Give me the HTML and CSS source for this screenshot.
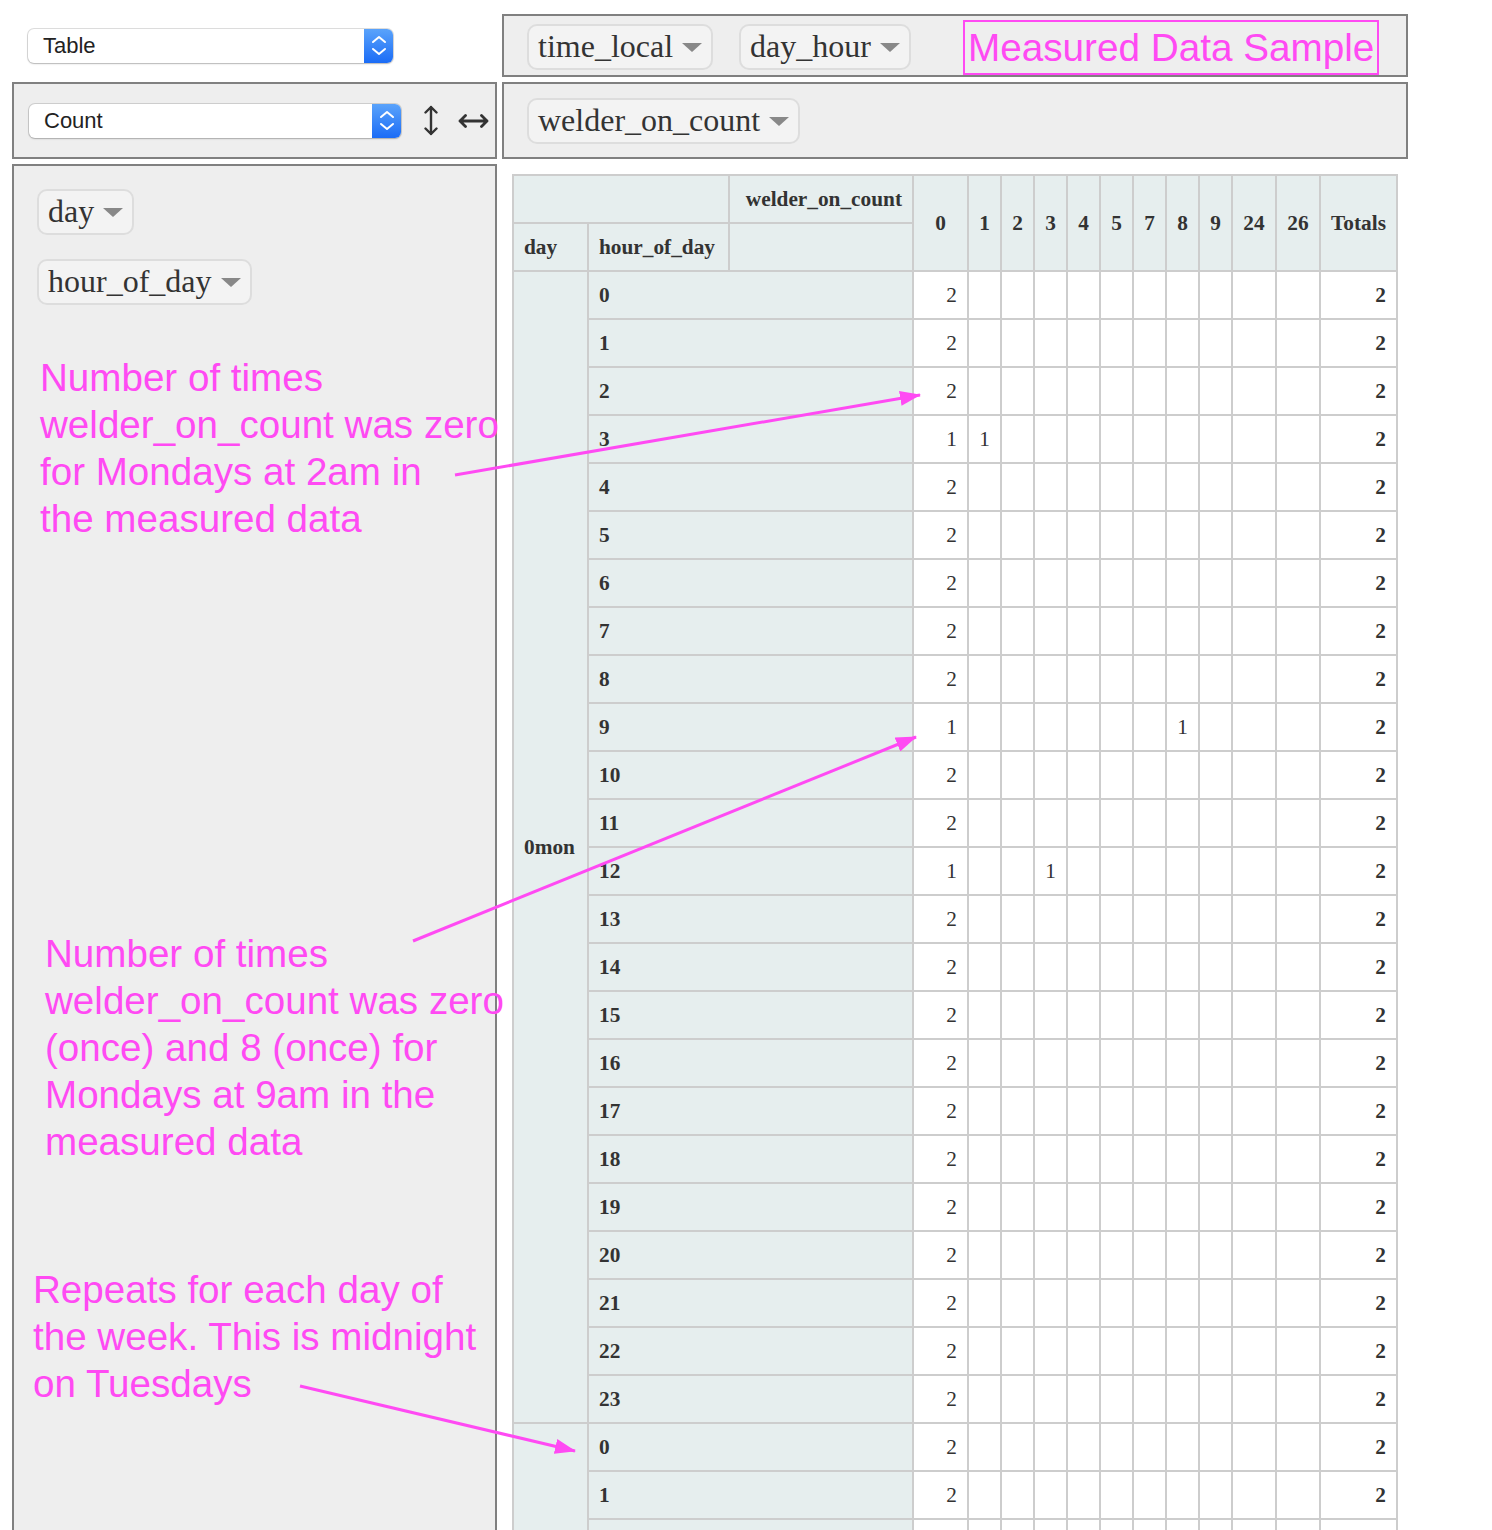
FILE: index.html
```html
<!DOCTYPE html>
<html>
<head>
<meta charset="utf-8">
<title>Pivot</title>
<link rel="stylesheet" href="styles.css">
</head>
<body>
<div class="page">
  <div class="ui">
    <div class="cell-renderer">
      <div class="select sel-table">
        <span class="select-label">Table</span>
        <span class="select-btn"><svg width="16" height="22" viewBox="0 0 16 22"><path d="M2 7 L8 2 L14 7 M2 14 L8 19 L14 14" fill="none" stroke="#fff" stroke-width="2" stroke-linecap="round" stroke-linejoin="round"/></svg></span>
      </div>
    </div>
    <div class="panel cols">
      <span class="pill">time_local<span class="tri"></span></span>
      <span class="pill">day_hour<span class="tri"></span></span>
      <span class="note-box">Measured Data Sample</span>
    </div>
    <div class="panel vals">
      <div class="select sel-count">
        <span class="select-label">Count</span>
        <span class="select-btn"><svg width="16" height="22" viewBox="0 0 16 22"><path d="M2 7 L8 2 L14 7 M2 14 L8 19 L14 14" fill="none" stroke="#fff" stroke-width="2" stroke-linecap="round" stroke-linejoin="round"/></svg></span>
      </div>
      <svg class="ord-v" width="14" height="31" viewBox="0 0 14 31"><path d="M7 2 V29 M1.5 7.5 L7 2 L12.5 7.5 M1.5 23.5 L7 29 L12.5 23.5" fill="none" stroke="#333" stroke-width="2.4" stroke-linecap="round" stroke-linejoin="round"/></svg>
      <svg class="ord-h" width="31" height="14" viewBox="0 0 31 14"><path d="M2 7 H29 M7.5 1.5 L2 7 L7.5 12.5 M23.5 1.5 L29 7 L23.5 12.5" fill="none" stroke="#333" stroke-width="2.8" stroke-linecap="round" stroke-linejoin="round"/></svg>
    </div>
    <div class="panel cols2">
      <span class="pill">welder_on_count<span class="tri"></span></span>
    </div>
    <div class="panel rows">
      <span class="pill">day<span class="tri"></span></span>
      <span class="pill">hour_of_day<span class="tri"></span></span>
    </div>
    <div class="output">
      <table class="pvt">
        <colgroup>
          <col style="width:75px"><col style="width:141px"><col style="width:184px"><col style="width:55px">
          <col style="width:33px"><col style="width:33px"><col style="width:33px"><col style="width:33px">
          <col style="width:33px"><col style="width:33px"><col style="width:33px"><col style="width:33px">
          <col style="width:44px"><col style="width:44px"><col style="width:77px">
        </colgroup>
        <thead>
          <tr><th colspan="2"></th><th class="axis-r">welder_on_count</th><th rowspan="2" class="cl">0</th><th rowspan="2" class="cl">1</th><th rowspan="2" class="cl">2</th><th rowspan="2" class="cl">3</th><th rowspan="2" class="cl">4</th><th rowspan="2" class="cl">5</th><th rowspan="2" class="cl">7</th><th rowspan="2" class="cl">8</th><th rowspan="2" class="cl">9</th><th rowspan="2" class="cl">24</th><th rowspan="2" class="cl">26</th><th rowspan="2" class="cl">Totals</th></tr>
          <tr><th>day</th><th>hour_of_day</th><th></th></tr>
        </thead>
        <tbody>
          <tr><th rowspan="24">0mon</th><th colspan="2">0</th><td>2</td><td></td><td></td><td></td><td></td><td></td><td></td><td></td><td></td><td></td><td></td><td class="tot">2</td></tr>
          <tr><th colspan="2">1</th><td>2</td><td></td><td></td><td></td><td></td><td></td><td></td><td></td><td></td><td></td><td></td><td class="tot">2</td></tr>
          <tr><th colspan="2">2</th><td>2</td><td></td><td></td><td></td><td></td><td></td><td></td><td></td><td></td><td></td><td></td><td class="tot">2</td></tr>
          <tr><th colspan="2">3</th><td>1</td><td>1</td><td></td><td></td><td></td><td></td><td></td><td></td><td></td><td></td><td></td><td class="tot">2</td></tr>
          <tr><th colspan="2">4</th><td>2</td><td></td><td></td><td></td><td></td><td></td><td></td><td></td><td></td><td></td><td></td><td class="tot">2</td></tr>
          <tr><th colspan="2">5</th><td>2</td><td></td><td></td><td></td><td></td><td></td><td></td><td></td><td></td><td></td><td></td><td class="tot">2</td></tr>
          <tr><th colspan="2">6</th><td>2</td><td></td><td></td><td></td><td></td><td></td><td></td><td></td><td></td><td></td><td></td><td class="tot">2</td></tr>
          <tr><th colspan="2">7</th><td>2</td><td></td><td></td><td></td><td></td><td></td><td></td><td></td><td></td><td></td><td></td><td class="tot">2</td></tr>
          <tr><th colspan="2">8</th><td>2</td><td></td><td></td><td></td><td></td><td></td><td></td><td></td><td></td><td></td><td></td><td class="tot">2</td></tr>
          <tr><th colspan="2">9</th><td>1</td><td></td><td></td><td></td><td></td><td></td><td></td><td>1</td><td></td><td></td><td></td><td class="tot">2</td></tr>
          <tr><th colspan="2">10</th><td>2</td><td></td><td></td><td></td><td></td><td></td><td></td><td></td><td></td><td></td><td></td><td class="tot">2</td></tr>
          <tr><th colspan="2">11</th><td>2</td><td></td><td></td><td></td><td></td><td></td><td></td><td></td><td></td><td></td><td></td><td class="tot">2</td></tr>
          <tr><th colspan="2">12</th><td>1</td><td></td><td></td><td>1</td><td></td><td></td><td></td><td></td><td></td><td></td><td></td><td class="tot">2</td></tr>
          <tr><th colspan="2">13</th><td>2</td><td></td><td></td><td></td><td></td><td></td><td></td><td></td><td></td><td></td><td></td><td class="tot">2</td></tr>
          <tr><th colspan="2">14</th><td>2</td><td></td><td></td><td></td><td></td><td></td><td></td><td></td><td></td><td></td><td></td><td class="tot">2</td></tr>
          <tr><th colspan="2">15</th><td>2</td><td></td><td></td><td></td><td></td><td></td><td></td><td></td><td></td><td></td><td></td><td class="tot">2</td></tr>
          <tr><th colspan="2">16</th><td>2</td><td></td><td></td><td></td><td></td><td></td><td></td><td></td><td></td><td></td><td></td><td class="tot">2</td></tr>
          <tr><th colspan="2">17</th><td>2</td><td></td><td></td><td></td><td></td><td></td><td></td><td></td><td></td><td></td><td></td><td class="tot">2</td></tr>
          <tr><th colspan="2">18</th><td>2</td><td></td><td></td><td></td><td></td><td></td><td></td><td></td><td></td><td></td><td></td><td class="tot">2</td></tr>
          <tr><th colspan="2">19</th><td>2</td><td></td><td></td><td></td><td></td><td></td><td></td><td></td><td></td><td></td><td></td><td class="tot">2</td></tr>
          <tr><th colspan="2">20</th><td>2</td><td></td><td></td><td></td><td></td><td></td><td></td><td></td><td></td><td></td><td></td><td class="tot">2</td></tr>
          <tr><th colspan="2">21</th><td>2</td><td></td><td></td><td></td><td></td><td></td><td></td><td></td><td></td><td></td><td></td><td class="tot">2</td></tr>
          <tr><th colspan="2">22</th><td>2</td><td></td><td></td><td></td><td></td><td></td><td></td><td></td><td></td><td></td><td></td><td class="tot">2</td></tr>
          <tr><th colspan="2">23</th><td>2</td><td></td><td></td><td></td><td></td><td></td><td></td><td></td><td></td><td></td><td></td><td class="tot">2</td></tr>
          <tr><th rowspan="3"></th><th colspan="2">0</th><td>2</td><td></td><td></td><td></td><td></td><td></td><td></td><td></td><td></td><td></td><td></td><td class="tot">2</td></tr>
          <tr><th colspan="2">1</th><td>2</td><td></td><td></td><td></td><td></td><td></td><td></td><td></td><td></td><td></td><td></td><td class="tot">2</td></tr>
          <tr><th colspan="2"></th><td></td><td></td><td></td><td></td><td></td><td></td><td></td><td></td><td></td><td></td><td></td><td class="tot"></td></tr>
        </tbody>
      </table>
    </div>
  </div>

  <div class="note n1">Number of times<br>welder_on_count was zero<br>for Mondays at 2am in<br>the measured data</div>
  <div class="note n2">Number of times<br>welder_on_count was zero<br>(once) and 8 (once) for<br>Mondays at 9am in the<br>measured data</div>
  <div class="note n3">Repeats for each day of<br>the week. This is midnight<br>on Tuesdays</div>

  <svg class="arrows" width="1492" height="1530" viewBox="0 0 1492 1530">
    <defs>
      <marker id="ah" markerWidth="21" markerHeight="15" refX="20" refY="7.5" orient="auto" markerUnits="userSpaceOnUse">
        <path d="M0,0 L21,7.5 L0,15 Z" fill="#ff4af3"/>
      </marker>
    </defs>
    <line x1="455" y1="475" x2="920" y2="395" stroke="#ff4af3" stroke-width="3" marker-end="url(#ah)"/>
    <line x1="413" y1="941" x2="916" y2="737" stroke="#ff4af3" stroke-width="3" marker-end="url(#ah)"/>
    <line x1="300" y1="1386" x2="575" y2="1451" stroke="#ff4af3" stroke-width="3" marker-end="url(#ah)"/>
  </svg>
</div>
</body>
</html>
```
FILE: styles.css
```css
html, body {
  margin: 0;
  padding: 0;
}
body {
  width: 1492px;
  height: 1530px;
  overflow: hidden;
  background: #fff;
  font-family: "Liberation Serif", "Times New Roman", serif;
  color: #333;
}
.page {
  position: relative;
  padding: 14px 0 0 12px;
}
.ui {
  display: grid;
  grid-template-columns: 485px 906px;
  grid-template-rows: 63px 77px auto;
  gap: 5px;
}
.panel {
  border: 2px solid #808080;
  background: #eee;
  box-sizing: border-box;
}
.cell-renderer {
  padding: 15px 0 0 16px;
}
.select {
  display: flex;
  height: 34px;
  box-sizing: border-box;
  border-radius: 6px;
  background: #fff;
  box-shadow: 0 0 0 1px rgba(0, 0, 0, 0.13), 0 1px 2px rgba(0, 0, 0, 0.18);
  font-family: "Liberation Sans", Arial, sans-serif;
  font-size: 22px;
  color: #222;
}
.sel-table { width: 365px; }
.sel-count { width: 372px; }
.select-label {
  flex: 1;
  padding-left: 15px;
  line-height: 34px;
}
.select-btn {
  width: 29px;
  border-radius: 0 6px 6px 0;
  background: linear-gradient(#5aa3fb, #1b6cf6);
  display: flex;
  align-items: center;
  justify-content: center;
}
.cols {
  display: flex;
  align-items: center;
  padding: 3px 0 0 23px;
}
.cols .pill + .pill { margin-left: 26px; }
.cols2 {
  display: flex;
  align-items: center;
  padding: 1px 0 0 23px;
}
.vals {
  display: flex;
  align-items: center;
  padding: 0 0 0 15px;
}
.ord-v { margin-left: 23px; }
.ord-h { margin-left: 20px; }
.rows {
  display: flex;
  flex-direction: column;
  align-items: flex-start;
  gap: 24px;
  padding: 23px 0 0 23px;
}
.pill {
  display: inline-flex;
  align-items: center;
  height: 46px;
  box-sizing: border-box;
  padding: 0 9px 2px 9px;
  background: #f3f3f3;
  border: 2px solid #ddd;
  border-radius: 10px;
  font-size: 32px;
  line-height: 1;
  color: #333;
  white-space: nowrap;
}
.tri {
  width: 0;
  height: 0;
  border-left: 10px solid transparent;
  border-right: 10px solid transparent;
  border-top: 9px solid #888;
  margin-left: 9px;
  margin-top: 3px;
}
.note-box {
  margin-left: 52px;
  height: 55px;
  box-sizing: border-box;
  border: 2px solid #ff4af3;
  padding: 5px 3px 5px 3px;
  font-family: "Liberation Sans", Arial, sans-serif;
  font-size: 38.7px;
  line-height: 41px;
  color: #ff4af3;
  white-space: nowrap;
}
.output {
  padding: 10px 0 0 10px;
}
.pvt {
  border-collapse: collapse;
  table-layout: fixed;
  width: 884px;
  font-size: 21.3px;
  color: #333;
}
.pvt tr { height: 48px; }
.pvt th, .pvt td {
  border: 2px solid #cdcdcd;
  padding: 0 10px;
  white-space: nowrap;
  overflow: hidden;
}
.pvt th {
  background: #e6eeee;
  font-weight: bold;
  text-align: left;
}
.pvt th.cl {
  text-align: center;
  padding: 0;
}
.pvt th.axis-r {
  text-align: right;
}
.pvt td {
  background: #fff;
  text-align: right;
}
.pvt td.tot { font-weight: bold; }
.note {
  position: absolute;
  font-family: "Liberation Sans", Arial, sans-serif;
  font-size: 38.6px;
  line-height: 47px;
  color: #ff4af3;
  white-space: nowrap;
}
.n1 { left: 40px; top: 354px; }
.n2 { left: 45px; top: 930px; }
.n3 { left: 33px; top: 1266px; }
.arrows {
  position: absolute;
  left: 0;
  top: 0;
  pointer-events: none;
}
```
